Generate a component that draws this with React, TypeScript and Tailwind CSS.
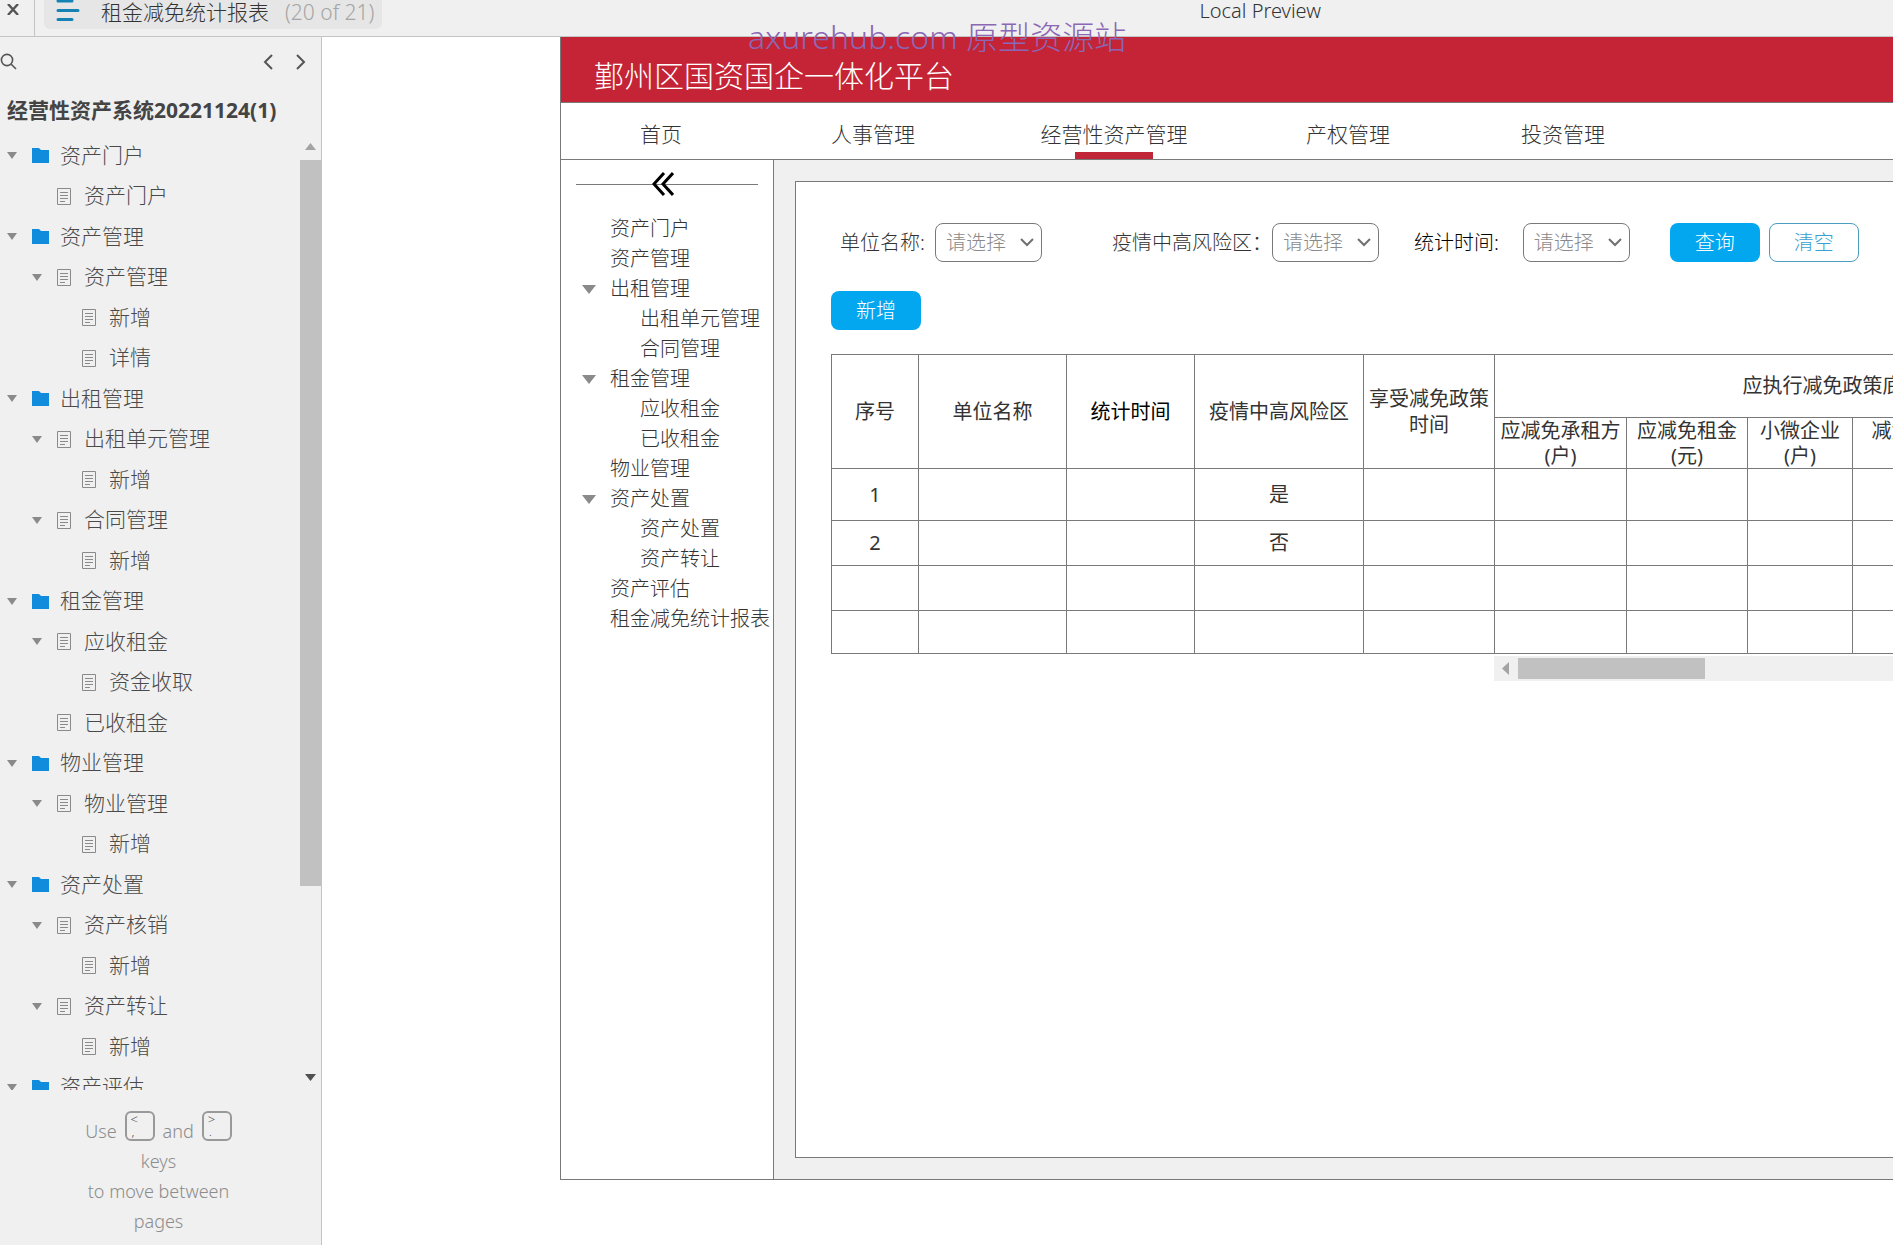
import { useState } from "react";

type TreeNode = {
	name: string;
	level: number;
	folder?: boolean;
	open?: boolean;
};

const pages: TreeNode[] = [
	{ name: "资产门户", level: 0, folder: true, open: true },
	{ name: "资产门户", level: 1 },
	{ name: "资产管理", level: 0, folder: true, open: true },
	{ name: "资产管理", level: 1, open: true },
	{ name: "新增", level: 2 },
	{ name: "详情", level: 2 },
	{ name: "出租管理", level: 0, folder: true, open: true },
	{ name: "出租单元管理", level: 1, open: true },
	{ name: "新增", level: 2 },
	{ name: "合同管理", level: 1, open: true },
	{ name: "新增", level: 2 },
	{ name: "租金管理", level: 0, folder: true, open: true },
	{ name: "应收租金", level: 1, open: true },
	{ name: "资金收取", level: 2 },
	{ name: "已收租金", level: 1 },
	{ name: "物业管理", level: 0, folder: true, open: true },
	{ name: "物业管理", level: 1, open: true },
	{ name: "新增", level: 2 },
	{ name: "资产处置", level: 0, folder: true, open: true },
	{ name: "资产核销", level: 1, open: true },
	{ name: "新增", level: 2 },
	{ name: "资产转让", level: 1, open: true },
	{ name: "新增", level: 2 },
	{ name: "资产评估", level: 0, folder: true, open: true },
];

const indents = ["pl-[7px]", "pl-8", "pl-[57px]"];

const navItems = [
	{ name: "首页", width: "w-[200px]" },
	{ name: "人事管理", width: "w-[224px]" },
	{ name: "经营性资产管理", width: "w-[258px]", active: true },
	{ name: "产权管理", width: "w-[210px]" },
	{ name: "投资管理", width: "w-[220px]" },
];

const menuItems = [
	{ name: "资产门户" },
	{ name: "资产管理" },
	{ name: "出租管理", open: true },
	{ name: "出租单元管理", child: true },
	{ name: "合同管理", child: true },
	{ name: "租金管理", open: true },
	{ name: "应收租金", child: true },
	{ name: "已收租金", child: true },
	{ name: "物业管理" },
	{ name: "资产处置", open: true },
	{ name: "资产处置", child: true },
	{ name: "资产转让", child: true },
	{ name: "资产评估" },
	{ name: "租金减免统计报表" },
];

const rows = [
	{ id: "1", risk: "是", height: "h-[52px]" },
	{ id: "2", risk: "否", height: "h-[45px]" },
	{ id: "", risk: "", height: "h-[45px]" },
	{ id: "", risk: "", height: "h-[43px]" },
];

const Caret = ({ className }: { className: string }) => (
	<svg viewBox="0 0 12 8" preserveAspectRatio="none" className={className}>
		<path d="M0 0h12L6 8z" fill="currentColor" />
	</svg>
);

const FolderIcon = () => (
	<svg width="17" height="15" viewBox="0 0 17 15" className="shrink-0">
		<path d="M0 0h7l2 2h8v13H0z" fill="#118bdb" />
	</svg>
);

const PageIcon = () => (
	<svg
		width="14"
		height="17"
		viewBox="0 0 14 17"
		fill="none"
		stroke="#8a8a8a"
		className="shrink-0"
	>
		<path d="M.5.5h13v16H.5zM3 4.5h8M3 7.5h8M3 10.5h8M3 13.5h5" />
	</svg>
);

const Chevron = ({ d, className }: { d: string; className?: string }) => (
	<svg
		width="10"
		height="16"
		viewBox="0 0 10 16"
		fill="none"
		stroke="#555"
		strokeWidth="2"
		className={className}
	>
		<path d={d} />
	</svg>
);

const KeyCap = ({ top, bottom }: { top: string; bottom: string }) => (
	<kbd className="flex h-[30px] w-[30px] flex-col rounded-md border-2 border-[#999] pl-1 font-sans text-[13px] leading-[12px] text-[#555]">
		<span>{top}</span>
		<span className="pl-px">{bottom}</span>
	</kbd>
);

const TopBar = () => (
	<header className="flex h-[37px] shrink-0 items-start border-b border-[#c4c4c4] bg-[#f0f0f0]">
		<button
			aria-label="Close"
			className="flex h-9 w-[35px] shrink-0 justify-start border-r border-[#c4c4c4] pt-1 pl-[7px]"
		>
			<svg width="12" height="11" viewBox="0 0 12 11" stroke="#555" strokeWidth="2.4">
				<path d="M1 0l10 11M11 0L1 11" />
			</svg>
		</button>
		<button className="ml-[9px] flex h-[29px] items-start rounded-b-md bg-[#e6e6e6] pr-2 pl-3 text-[21px] leading-[24px] text-[#333]">
			<svg
				width="24"
				height="22"
				viewBox="0 0 24 22"
				stroke="#1482b4"
				strokeWidth="3"
				strokeLinecap="round"
			>
				<path d="M2 1h14M2 10.5h20M2 19.5h14" />
			</svg>
			<span className="ml-[21px]">租金减免统计报表</span>
			<span className="ml-4 text-[#a5a5a5]">(20 of 21)</span>
		</button>
		<span className="ml-[817px] text-[20px] leading-[22px] whitespace-nowrap text-[#333]">
			Local Preview
		</span>
	</header>
);

const Sidebar = () => (
	<aside className="flex w-[322px] shrink-0 flex-col border-r border-[#c4c4c4] bg-[#f0f0f0]">
		<div className="flex h-[49px] shrink-0 items-center pr-[15px]">
			<button aria-label="Search">
				<svg
					width="17"
					height="17"
					viewBox="0 0 17 17"
					fill="none"
					stroke="#555"
					strokeWidth="1.6"
				>
					<circle cx="7" cy="7" r="5.6" />
					<path d="M11 11l5 5" />
				</svg>
			</button>
			<button aria-label="Previous page" className="ml-auto">
				<Chevron d="M9 1L2 8l7 7" />
			</button>
			<button aria-label="Next page" className="ml-[23px]">
				<Chevron d="M1 1l7 7-7 7" />
			</button>
		</div>
		<h1 className="flex h-[49px] shrink-0 items-center pl-[7px] text-[21px] font-bold whitespace-nowrap text-[#444]">
			经营性资产系统20221124(1)
		</h1>
		<div className="flex min-h-0 flex-1">
			<ul className="min-w-0 flex-1 overflow-hidden">
				{pages.map((page, index) => (
					<li
						key={index}
						className={`flex h-10 items-center odd:h-[41px] ${indents[page.level]}`}
					>
						<span className="flex w-[25px] shrink-0 items-center">
							{page.open && <Caret className="h-[7px] w-[10px] text-[#8a8a8a]" />}
						</span>
						{page.folder ? <FolderIcon /> : <PageIcon />}
						<a
							href="#"
							className={`text-[21px] whitespace-nowrap text-[#4a4a4a] ${
								page.folder ? "ml-[11px]" : "ml-[13px]"
							}`}
						>
							{page.name}
						</a>
					</li>
				))}
			</ul>
			<div className="flex w-[21px] shrink-0 flex-col items-center pt-2 pb-[9px]">
				<Caret className="h-[7px] w-[11px] rotate-180 text-[#a3a3a3]" />
				<div className="mt-[10px] h-[726px] w-full bg-[#c1c1c1]" />
				<Caret className="mt-auto h-[7px] w-[11px] text-[#505050]" />
			</div>
		</div>
		<div className="flex shrink-0 flex-col items-center pt-[21px] pr-1 pb-[9px] text-[18px] leading-[30px] text-[#8c8c8c]">
			<div className="flex h-[35px] items-start gap-2">
				<span className="self-end">Use</span>
				<KeyCap top="<" bottom="," />
				<span className="self-end">and</span>
				<KeyCap top=">" bottom="." />
			</div>
			<span>keys</span>
			<span>to move between</span>
			<span>pages</span>
		</div>
	</aside>
);

const SideMenu = () => (
	<nav className="w-[213px] shrink-0 border-r border-[#797979] bg-white">
		<button aria-label="Collapse" className="relative mt-3 ml-[15px] flex h-6 w-[182px] items-center">
			<span className="h-px w-full bg-[#797979]" />
			<svg
				width="22"
				height="24"
				viewBox="0 0 22 24"
				fill="none"
				stroke="#000"
				strokeWidth="3"
				className="absolute left-[76px]"
			>
				<path d="M12 1L2 12l10 11M21 1L11 12l10 11" />
			</svg>
		</button>
		<ul className="mt-[18px]">
			{menuItems.map((item, index) => (
				<li key={index} className="flex h-[30px] items-center pl-[21px]">
					<span className="w-7 shrink-0">
						{item.open && <Caret className="h-[9px] w-[14px] text-[#8a8a8a]" />}
					</span>
					<a
						href="#"
						className={`text-[20px] whitespace-nowrap text-[#333] ${
							item.child ? "pl-[30px]" : ""
						}`}
					>
						{item.name}
					</a>
				</li>
			))}
		</ul>
	</nav>
);

const SelectField = ({
	id,
	label,
	gap,
	dark,
}: {
	id: string;
	label: string;
	gap: string;
	dark?: boolean;
}) => {
	const [value, setValue] = useState("");

	return (
		<div className={`flex shrink-0 items-center ${gap}`}>
			<label
				htmlFor={id}
				className={`text-[20px] whitespace-nowrap ${dark ? "text-black" : "text-[#333]"}`}
			>
				{label}
			</label>
			<div className="relative">
				<select
					id={id}
					value={value}
					onChange={(e) => setValue(e.target.value)}
					className="h-[39px] w-[107px] appearance-none rounded-lg border border-[#797979] bg-white pl-[10px] text-[20px] text-[#8a8a8a]"
				>
					<option value="">请选择</option>
				</select>
				<svg
					width="14"
					height="9"
					viewBox="0 0 14 9"
					fill="none"
					stroke="#707070"
					strokeWidth="2"
					className="pointer-events-none absolute top-[15px] right-2"
				>
					<path d="M1 1l6 6 6-6" />
				</svg>
			</div>
		</div>
	);
};

const cell = "border border-[#797979] p-0 text-center font-normal";

const ReportTable = () => (
	<table className="w-[1340px] table-fixed border-collapse text-[20px] leading-[26px] text-[#333]">
		<colgroup>
			<col className="w-[87px]" />
			<col className="w-[148px]" />
			<col className="w-[128px]" />
			<col className="w-[169px]" />
			<col className="w-[131px]" />
			<col className="w-[132px]" />
			<col className="w-[121px]" />
			<col className="w-[105px]" />
			<col className="w-[118px]" />
			<col />
		</colgroup>
		<thead>
			<tr className="h-[63px]">
				<th rowSpan={2} className={cell}>
					序号
				</th>
				<th rowSpan={2} className={cell}>
					单位名称
				</th>
				<th rowSpan={2} className={`${cell} text-black`}>
					统计时间
				</th>
				<th rowSpan={2} className={cell}>
					疫情中高风险区
				</th>
				<th rowSpan={2} className={cell}>
					享受减免政策
					<br />
					时间
				</th>
				<th colSpan={5} className={cell}>
					应执行减免政策底数
				</th>
			</tr>
			<tr className="h-[51px] leading-[25px]">
				<th className={cell}>
					应减免承租方
					<br />
					(户)
				</th>
				<th className={cell}>
					应减免租金
					<br />
					(元)
				</th>
				<th className={cell}>
					小微企业
					<br />
					(户)
				</th>
				<th className={cell}>
					减免租金
					<br />
					(元)
				</th>
				<th className={cell}></th>
			</tr>
		</thead>
		<tbody>
			{rows.map((row, index) => (
				<tr key={index} className={row.height}>
					<td className={cell}>{row.id}</td>
					<td className={cell}></td>
					<td className={cell}></td>
					<td className={cell}>{row.risk}</td>
					<td className={cell}></td>
					<td className={cell}></td>
					<td className={cell}></td>
					<td className={cell}></td>
					<td className={cell}></td>
					<td className={cell}></td>
				</tr>
			))}
		</tbody>
	</table>
);

const button = "h-[39px] w-[90px] shrink-0 rounded-lg text-[20px]";

const ReportPanel = () => (
	<section className="min-w-0 flex-1 overflow-hidden border border-r-0 border-[#797979] bg-white pt-[41px] pl-[35px]">
		<form className="flex items-center pl-[9px]" onSubmit={(e) => e.preventDefault()}>
			<SelectField id="unit" label="单位名称:" gap="gap-[10px]" />
			<div className="w-[70px] shrink-0" />
			<SelectField id="risk" label="疫情中高风险区：" gap="gap-0" />
			<div className="w-[35px] shrink-0" />
			<SelectField id="time" label="统计时间:" gap="gap-6" dark />
			<button type="submit" className={`${button} ml-10 bg-[#02a7f0] text-white`}>
				查询
			</button>
			<button
				type="reset"
				className={`${button} ml-[9px] border border-[#4a9cc0] bg-white text-[#3a9fd0]`}
			>
				清空
			</button>
		</form>
		<button className={`${button} mt-[29px] block bg-[#02a7f0] text-white`}>新增</button>
		<div className="mt-6">
			<ReportTable />
			<div className="mt-[2px] ml-[663px] flex h-[25px] items-center bg-[#f0f0f0] pl-2">
				<svg width="7" height="13" viewBox="0 0 7 13">
					<path d="M7 0v13L0 6.500z" fill="#a3a3a3" />
				</svg>
				<div className="ml-[9px] h-[21px] w-[187px] bg-[#c1c1c1]" />
			</div>
		</div>
	</section>
);

export default function App() {
	return (
		<div className="relative flex h-screen flex-col overflow-hidden bg-white font-['Noto_Sans','Noto_Sans_CJK_SC',sans-serif] font-light">
			<TopBar />
			<div className="flex min-h-0 flex-1">
				<Sidebar />
				<main className="min-w-0 flex-1 pb-[65px] pl-[238px]">
					<div className="flex h-full flex-col border-b border-l border-[#797979]">
						<div className="flex h-[66px] shrink-0 items-center border-b border-[#797979] bg-[#c52436] pt-3 pl-[33px] text-[30px] text-white">
							鄞州区国资国企一体化平台
						</div>
						<nav className="flex h-[57px] shrink-0 border-b border-[#797979] text-[21px] text-[#333]">
							{navItems.map((item) => (
								<a
									key={item.name}
									href="#"
									className={`relative flex items-center justify-center pt-2 whitespace-nowrap ${item.width}`}
								>
									{item.name}
									{item.active && (
										<span className="absolute bottom-0 h-[7px] w-[78px] bg-[#c02638]" />
									)}
								</a>
							))}
						</nav>
						<div className="flex min-h-0 flex-1">
							<SideMenu />
							<div className="flex min-w-0 flex-1 bg-[#f0f0f0] pt-[21px] pb-[21px] pl-[21px]">
								<ReportPanel />
							</div>
						</div>
					</div>
				</main>
			</div>
			<div className="pointer-events-none absolute top-[13px] left-[748px] text-[32px] leading-[48px] whitespace-nowrap text-[#8b67b5]">
				axurehub.com 原型资源站
			</div>
		</div>
	);
}
